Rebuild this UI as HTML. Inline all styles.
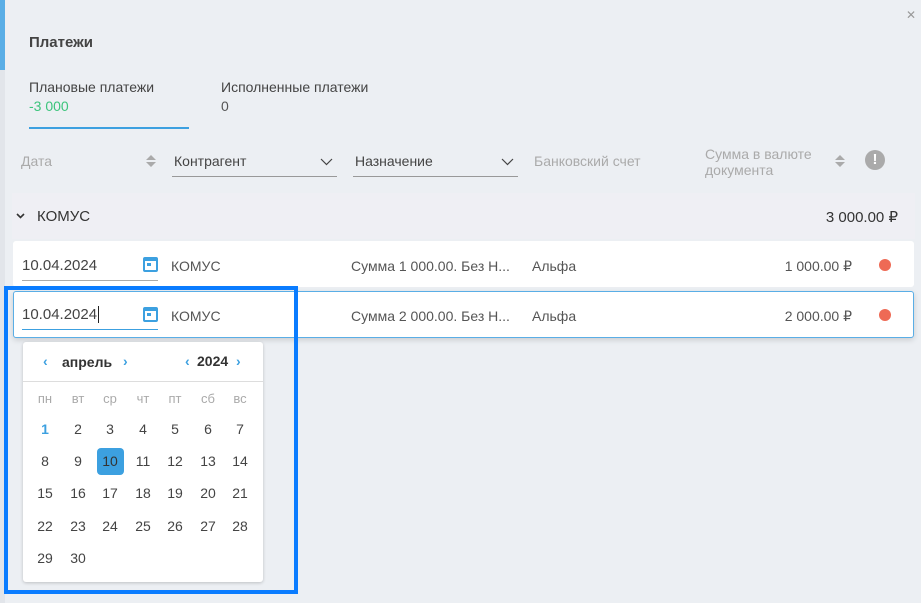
<!DOCTYPE html>
<html><head><meta charset="utf-8"><style>
*{box-sizing:border-box;margin:0;padding:0}
body{width:921px;height:603px;overflow:hidden;background:#eceff3;font-family:"Liberation Sans","DejaVu Sans",sans-serif;color:#333;position:relative;font-size:14px}
.a{position:absolute;white-space:nowrap}
.g{color:#aaa}
.ul{position:absolute;height:1px;background:#999}
.cal-ic{position:absolute;width:15px;height:15px;border:2px solid #3ca0e0;border-top-width:4px;border-radius:2px}
.cal-ic:after{content:"";position:absolute;left:2px;top:2px;width:4px;height:3px;background:#3ca0e0}
.dot{position:absolute;width:12px;height:12px;border-radius:50%;background:#ee6a55}
.d{position:absolute;width:32px;text-align:center;font-size:14px;color:#444}
.r{position:absolute;text-align:right;width:120px}
</style></head><body>
<div class="a" style="left:0;top:0;width:5px;height:70px;background:#5aaee6"></div>
<div class="a" style="left:0;top:70px;width:5px;height:533px;background:#e2e5ea"></div>
<div class="a" style="left:906px;top:8px;font-size:12px;color:#999">✕</div>
<div class="a" style="left:29px;top:34px;font-size:15px;font-weight:bold;color:#444">Платежи</div>
<div class="a" style="left:29px;top:79px;color:#444">Плановые платежи</div>
<div class="a" style="left:29px;top:98px;color:#3cc47c;font-size:14px">-3 000</div>
<div class="a" style="left:29px;top:127px;width:160px;height:2px;background:#3ca0e0"></div>
<div class="a" style="left:221px;top:79px;color:#444">Исполненные платежи</div>
<div class="a" style="left:221px;top:98px;color:#555;font-size:14px">0</div>

<div class="a g" style="left:21px;top:153px">Дата</div>
<svg class="a" style="left:145px;top:154px" width="12" height="14"><path d="M1 6L6 1l5 5zM1 8l5 5 5-5z" fill="#aaa"/></svg>
<div class="a" style="left:174px;top:153px;color:#444">Контрагент</div>
<svg class="a" style="left:320px;top:158px" width="13" height="8"><path d="M1 1l5.5 5.5L12 1" fill="none" stroke="#444" stroke-width="1.2"/></svg>
<div class="ul" style="left:172px;top:176px;width:165px"></div>
<div class="a" style="left:355px;top:153px;color:#444">Назначение</div>
<svg class="a" style="left:501px;top:158px" width="13" height="8"><path d="M1 1l5.5 5.5L12 1" fill="none" stroke="#444" stroke-width="1.2"/></svg>
<div class="ul" style="left:353px;top:176px;width:165px"></div>
<div class="a g" style="left:534px;top:153px">Банковский счет</div>
<div class="a g" style="left:705px;top:146px;line-height:16px">Сумма в валюте<br>документа</div>
<svg class="a" style="left:834px;top:154px" width="12" height="14"><path d="M1 6L6 1l5 5zM1 8l5 5 5-5z" fill="#aaa"/></svg>
<div class="a" style="left:865px;top:150px;width:20px;height:20px;border-radius:50%;background:#aaa;color:#fff;text-align:center;font-weight:bold;font-size:15px;line-height:20px">!</div>

<div class="a" style="left:12px;top:193px;width:903px;height:46px;background:#efeff4"></div>
<svg class="a" style="left:16px;top:213px" width="9" height="6"><path d="M1 1l3.5 3.5L8 1" fill="none" stroke="#333" stroke-width="1.6"/></svg>
<div class="a" style="left:37px;top:208px;font-size:15px;color:#333">КОМУС</div>
<div class="r" style="left:778px;top:208px;font-size:15px;color:#333">3 000.00 ₽</div>

<div class="a" style="left:13px;top:241px;width:901px;height:46px;background:#fff;border-radius:3px"></div>
<div class="a" style="left:22px;top:257px;font-size:15px;color:#444">10.04.2024</div>
<div class="ul" style="left:22px;top:280px;width:136px;background:#aaa"></div>
<div class="cal-ic" style="left:143px;top:257px"></div>
<div class="a" style="left:171px;top:258px;color:#555">КОМУС</div>
<div class="a" style="left:351px;top:258px;color:#555">Сумма 1 000.00. Без Н...</div>
<div class="a" style="left:532px;top:258px;color:#555">Альфа</div>
<div class="r" style="left:732px;top:258px;color:#555">1 000.00 ₽</div>
<div class="dot" style="left:879px;top:259px"></div>

<div class="a" style="left:13px;top:291px;width:901px;height:47px;background:#fff;border:1px solid #5aaee6;border-radius:3px;box-shadow:0 2px 6px rgba(0,0,0,.15)"></div>
<div class="a" style="left:22px;top:306px;font-size:15px;color:#444">10.04.2024<span style="border-left:1px solid #222;margin-left:1px"></span></div>
<div class="ul" style="left:22px;top:329px;width:136px;background:#3ca0e0"></div>
<div class="cal-ic" style="left:143px;top:307px"></div>
<div class="a" style="left:171px;top:308px;color:#555">КОМУС</div>
<div class="a" style="left:351px;top:308px;color:#555">Сумма 2 000.00. Без Н...</div>
<div class="a" style="left:532px;top:308px;color:#555">Альфа</div>
<div class="r" style="left:732px;top:308px;color:#555">2 000.00 ₽</div>
<div class="dot" style="left:879px;top:309px"></div>

<div class="a" style="left:23px;top:342px;width:240px;height:240px;background:#fff;border-radius:3px;box-shadow:0 1px 3px rgba(0,0,0,.2)"></div>
<div class="a" style="left:23px;top:381px;width:240px;height:1px;background:#ddd"></div>
<div class="a" style="left:43px;top:353px;color:#3ca0e0;font-weight:bold">‹</div>
<div class="a" style="left:62px;top:354px;color:#333;font-weight:bold">апрель</div>
<div class="a" style="left:123px;top:353px;color:#3ca0e0;font-weight:bold">›</div>
<div class="a" style="left:185px;top:353px;color:#3ca0e0;font-weight:bold">‹</div>
<div class="a" style="left:197px;top:353px;color:#333;font-weight:bold;font-size:14px">2024</div>
<div class="a" style="left:236px;top:353px;color:#3ca0e0;font-weight:bold">›</div>

<div class="d" style="left:29px;top:391px;font-size:13px;color:#aaa">пн</div>
<div class="d" style="left:62px;top:391px;font-size:13px;color:#aaa">вт</div>
<div class="d" style="left:94px;top:391px;font-size:13px;color:#aaa">ср</div>
<div class="d" style="left:127px;top:391px;font-size:13px;color:#aaa">чт</div>
<div class="d" style="left:159px;top:391px;font-size:13px;color:#aaa">пт</div>
<div class="d" style="left:192px;top:391px;font-size:13px;color:#aaa">сб</div>
<div class="d" style="left:224px;top:391px;font-size:13px;color:#aaa">вс</div>

<div class="a" style="left:97px;top:448px;width:27px;height:27px;background:#3ca0e0;border-radius:4px"></div>

<div class="d" style="left:29px;top:421px;color:#3ca0e0;font-weight:bold">1</div>
<div class="d" style="left:62px;top:421px">2</div><div class="d" style="left:94px;top:421px">3</div><div class="d" style="left:127px;top:421px">4</div><div class="d" style="left:159px;top:421px">5</div><div class="d" style="left:192px;top:421px">6</div><div class="d" style="left:224px;top:421px">7</div>
<div class="d" style="left:29px;top:453px">8</div><div class="d" style="left:62px;top:453px">9</div><div class="d" style="left:94px;top:453px;color:#333">10</div><div class="d" style="left:127px;top:453px">11</div><div class="d" style="left:159px;top:453px">12</div><div class="d" style="left:192px;top:453px">13</div><div class="d" style="left:224px;top:453px">14</div>
<div class="d" style="left:29px;top:485px">15</div><div class="d" style="left:62px;top:485px">16</div><div class="d" style="left:94px;top:485px">17</div><div class="d" style="left:127px;top:485px">18</div><div class="d" style="left:159px;top:485px">19</div><div class="d" style="left:192px;top:485px">20</div><div class="d" style="left:224px;top:485px">21</div>
<div class="d" style="left:29px;top:518px">22</div><div class="d" style="left:62px;top:518px">23</div><div class="d" style="left:94px;top:518px">24</div><div class="d" style="left:127px;top:518px">25</div><div class="d" style="left:159px;top:518px">26</div><div class="d" style="left:192px;top:518px">27</div><div class="d" style="left:224px;top:518px">28</div>
<div class="d" style="left:29px;top:550px">29</div><div class="d" style="left:62px;top:550px">30</div>

<div class="a" style="left:4px;top:286px;width:294px;height:308px;border:4px solid #0a7cff"></div>
</body></html>
